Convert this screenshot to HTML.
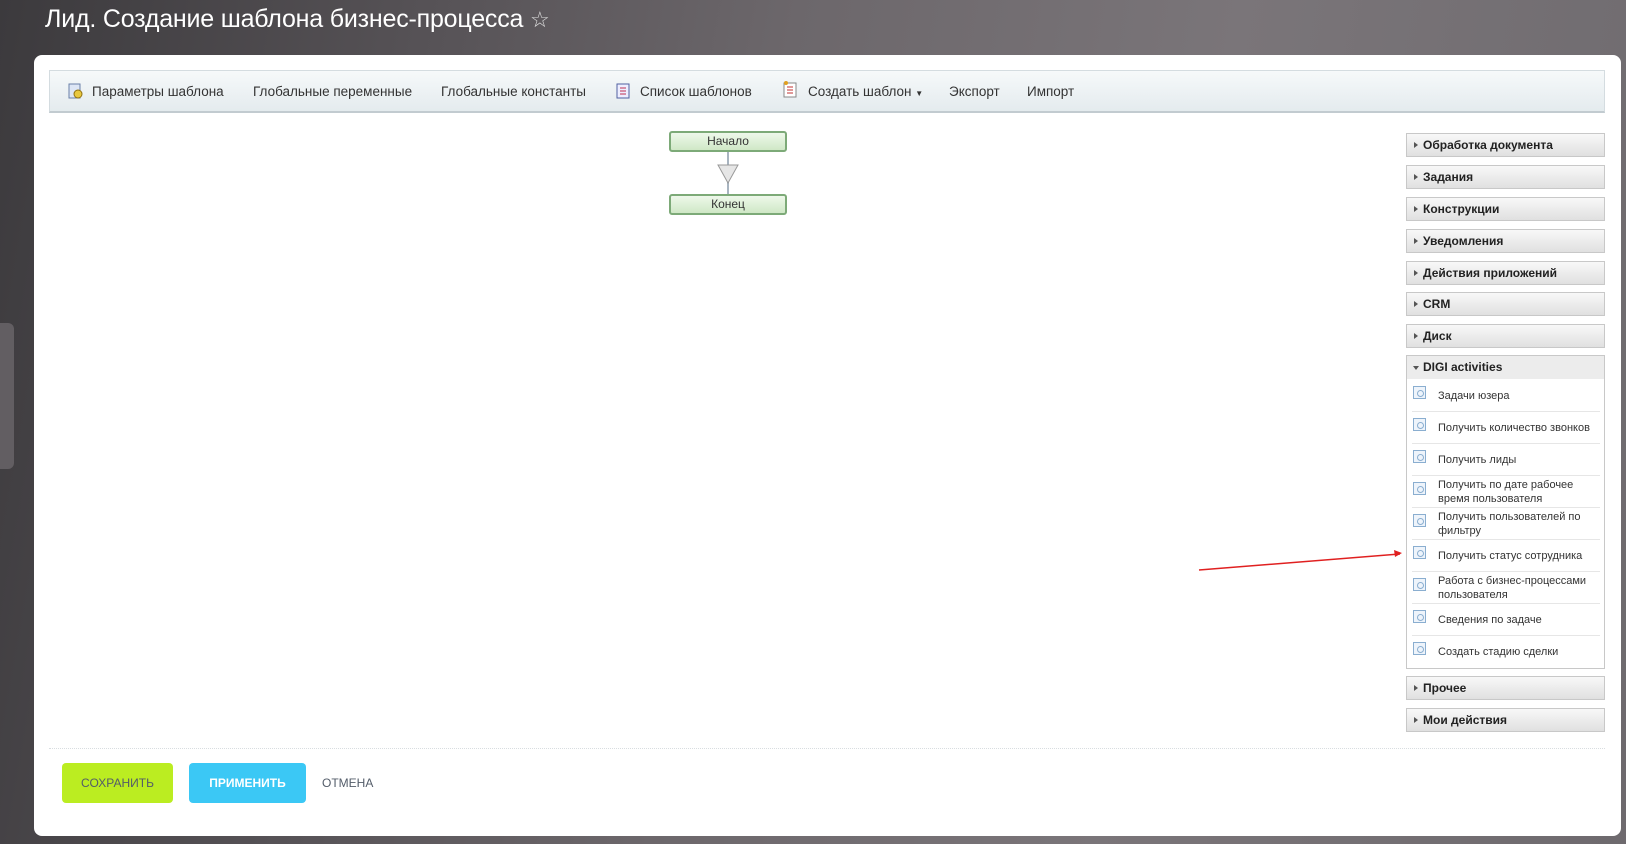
<!DOCTYPE html>
<html><head><meta charset="utf-8"><style>
*{margin:0;padding:0;box-sizing:border-box}
body{width:1626px;height:844px;overflow:hidden;position:relative;font-family:"Liberation Sans",sans-serif;
background:linear-gradient(100deg,#3c3a3d 0%,#575357 25%,#6c676b 45%,#7a7579 70%,#6e6a6e 100%)}
.abs{position:absolute}
.title{left:45px;top:5px;font-size:25px;color:#fff;letter-spacing:-0.2px}
.card{left:34px;top:55px;width:1587px;height:781px;background:#fff;border-radius:8px}
.tb{left:49px;top:70px;width:1556px;height:43px;background:linear-gradient(#f6f9fa,#e4ebee);border:1px solid #d4dce0;border-bottom:2px solid #c2cbd0}
.tb span{position:absolute;top:13px;font-size:13.5px;color:#333}
.node{width:118px;height:21px;border:2px solid #7daa78;border-radius:3px;background:linear-gradient(#eef8ea,#cfe8c6);font-size:12px;color:#333;text-align:center;line-height:17px}
.hd{left:1406px;width:199px;height:24px;border:1px solid #c8c8c8;background:linear-gradient(#f8f8f8,#e0e0e0);font-size:12px;font-weight:bold;color:#222;line-height:22px;padding-left:16px}
.hd:before{content:"";position:absolute;left:7px;top:8px;border-left:4px solid #555;border-top:3px solid transparent;border-bottom:3px solid transparent}
.hd.open:before{left:6px;top:10px;border-top:4px solid #555;border-left:3px solid transparent;border-right:3px solid transparent;border-bottom:0}
.it{left:1412px;width:188px;height:32px;border-bottom:1px solid #e6e6e6;font-size:11px;color:#333;line-height:14px;padding-left:26px;display:flex;align-items:center}
.it i{position:absolute;left:1px;top:6px;width:13px;height:13px;border:1px solid #8aaed0;background:#eef4fb}
.it i:after{content:"";position:absolute;left:3px;top:3px;width:5px;height:5px;border:1px solid #8aaed0;border-radius:50%}
.btn{top:763px;height:40px;border-radius:4px;font-size:12px;font-weight:bold;text-align:center;line-height:40px}
</style></head><body>
<div class="abs" style="left:0;top:323px;width:14px;height:146px;background:#625e62;border-radius:0 6px 6px 0"></div>
<div class="abs title">Лид. Создание шаблона бизнес-процесса <span style="font-size:22px;color:#ddd">☆</span></div>
<div class="abs card"></div>
<div class="abs tb">
<svg class="abs" style="left:18px;top:12px" width="16" height="16"><rect x="1" y="1" width="11" height="14" fill="#dde6f5" stroke="#6a80a8"/><circle cx="10" cy="11" r="4" fill="#e8c840" stroke="#907010"/></svg>
<span style="left:42px">Параметры шаблона</span>
<span style="left:203px">Глобальные переменные</span>
<span style="left:391px">Глобальные константы</span>
<svg class="abs" style="left:566px;top:12px" width="14" height="16"><rect x="1" y="1" width="12" height="14" fill="#eef" stroke="#5060a0"/><path d="M4 5h6M4 8h6M4 11h6" stroke="#c03050"/></svg>
<span style="left:590px">Список шаблонов</span>
<svg class="abs" style="left:733px;top:9px" width="14" height="18"><rect x="1" y="3" width="12" height="14" fill="#fff" stroke="#888"/><path d="M4 7h6M4 10h6M4 13h6" stroke="#c03030"/><circle cx="3" cy="3" r="2" fill="#e0a020"/></svg>
<span style="left:758px">Создать шаблон <small style="font-size:8px">▼</small></span>
<span style="left:899px">Экспорт</span>
<span style="left:977px">Импорт</span>
</div>
<div class="abs node" style="left:669px;top:131px">Начало</div>
<div class="abs" style="left:727px;top:152px;width:2px;height:42px;background:#a8b4c0"></div>
<svg class="abs" style="left:717px;top:164px" width="22" height="20"><path d="M1 1h20L11 19z" fill="#e6e6e6" stroke="#999"/></svg>
<div class="abs node" style="left:669px;top:194px">Конец</div>

<div class="abs hd" style="top:133px">Обработка документа</div>
<div class="abs hd" style="top:165px">Задания</div>
<div class="abs hd" style="top:197px">Конструкции</div>
<div class="abs hd" style="top:229px">Уведомления</div>
<div class="abs hd" style="top:261px">Действия приложений</div>
<div class="abs hd" style="top:292px">CRM</div>
<div class="abs hd" style="top:324px">Диск</div>
<div class="abs" style="left:1406px;top:355px;width:199px;height:314px;border:1px solid #c8c8c8;background:#fff"></div>
<div class="abs hd open" style="top:355px;border-bottom:none;background:#ececec">DIGI activities</div>
<div class="abs it" style="top:380px"><i></i>Задачи юзера</div>
<div class="abs it" style="top:412px"><i></i>Получить количество звонков</div>
<div class="abs it" style="top:444px"><i></i>Получить лиды</div>
<div class="abs it" style="top:476px"><i></i>Получить по дате рабочее время пользователя</div>
<div class="abs it" style="top:508px"><i></i>Получить пользователей по фильтру</div>
<div class="abs it" style="top:540px"><i></i>Получить статус сотрудника</div>
<div class="abs it" style="top:572px"><i></i>Работа с бизнес-процессами пользователя</div>
<div class="abs it" style="top:604px"><i></i>Сведения по задаче</div>
<div class="abs it" style="top:636px;border-bottom:none"><i></i>Создать стадию сделки</div>
<div class="abs hd" style="top:676px">Прочее</div>
<div class="abs hd" style="top:708px">Мои действия</div>

<svg class="abs" style="left:1195px;top:548px" width="215" height="26"><path d="M4 22L205 6" stroke="#e02020" stroke-width="1.5"/><path d="M207 5l-8-3 1 7z" fill="#e02020"/></svg>

<div class="abs" style="left:49px;top:748px;width:1556px;border-top:1px dotted #d8dde0"></div>
<div class="abs btn" style="left:62px;width:111px;background:#bbed21;color:#535c69;font-weight:normal">СОХРАНИТЬ</div>
<div class="abs btn" style="left:189px;width:117px;background:#3bc8f5;color:#fff">ПРИМЕНИТЬ</div>
<div class="abs" style="left:322px;top:776px;font-size:12px;color:#535c69">ОТМЕНА</div>
</body></html>
